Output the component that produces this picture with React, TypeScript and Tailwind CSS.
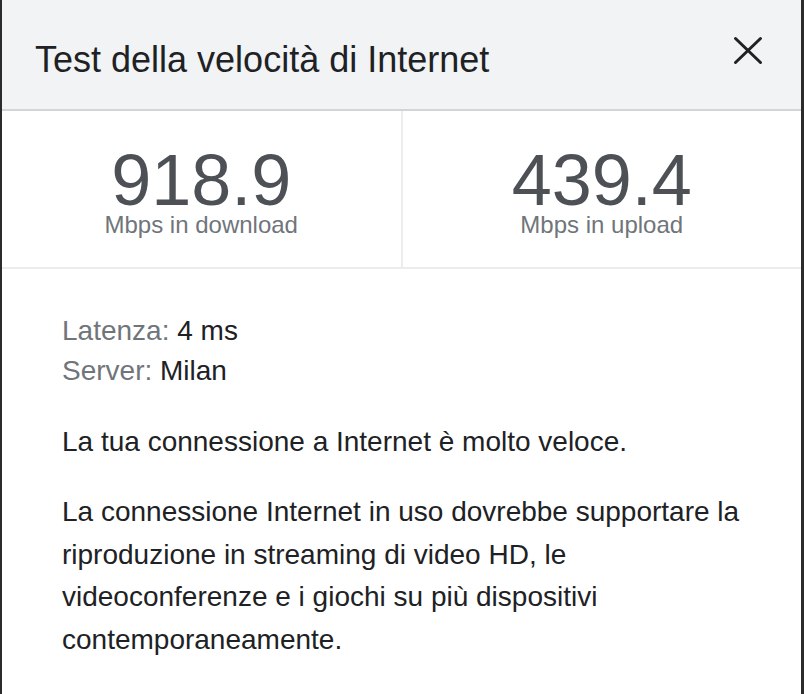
import React from 'react'

const font = { fontFamily: '"Liberation Sans", Arial, sans-serif' }

function Stat({ value, label }: { value: string; label: string }) {
  return (
    <div className="flex flex-1 flex-col items-center pt-[38px]">
      <div className="text-[72px] leading-[62px] text-[#4d5156]">{value}</div>
      <div className="text-[24px] leading-[28px] text-[#70757a]">{label}</div>
    </div>
  )
}

export default function App() {
  return (
    <div className="flex h-[694px] w-[804px] overflow-hidden bg-[#2b2b2b]" style={font}>
      <div className="w-[2px] shrink-0 bg-[#2b2b2b]" />
      <div className="flex flex-1 flex-col bg-white">
        <div className="flex h-[111px] shrink-0 items-center justify-between border-b-2 border-[#d3d4d6] bg-[#f1f3f4] pl-[33px] pr-[38px]">
          <h1 className="pt-[11px] text-[36px] leading-none text-[#202124]">Test della velocità di Internet</h1>
          <button type="button" className="mb-[8px] text-[#202124]" aria-label="Chiudi">
            <svg width="30" height="30" viewBox="0 0 30 30" fill="none" stroke="currentColor" strokeWidth={3} strokeLinecap="round">
              <path d="M2.5 2.5l25 24M27.5 2.5l-25 24" />
            </svg>
          </button>
        </div>

        <div className="flex h-[158px] shrink-0 border-b-2 border-[#ececec]">
          <Stat value="918.9" label="Mbps in download" />
          <div className="w-[2px] bg-[#ececec]" />
          <Stat value="439.4" label="Mbps in upload" />
        </div>

        <div className="px-[60px] pt-[42px] text-[28px] text-[#202124]">
          <div className="leading-[40px]">
            <div>
              <span className="text-[#70757a]">Latenza:</span> 4 ms
            </div>
            <div>
              <span className="text-[#70757a]">Server:</span> Milan
            </div>
          </div>
          <p className="mt-[30px] leading-[41px]">La tua connessione a Internet è molto veloce.</p>
          <p className="mt-[29px] leading-[42.5px]">
            La connessione Internet in uso dovrebbe supportare la riproduzione in streaming di video HD, le
            videoconferenze e i giochi su più dispositivi contemporaneamente.
          </p>
        </div>
      </div>
      <div className="w-[3px] shrink-0 bg-[#2b2b2b]" />
    </div>
  )
}
